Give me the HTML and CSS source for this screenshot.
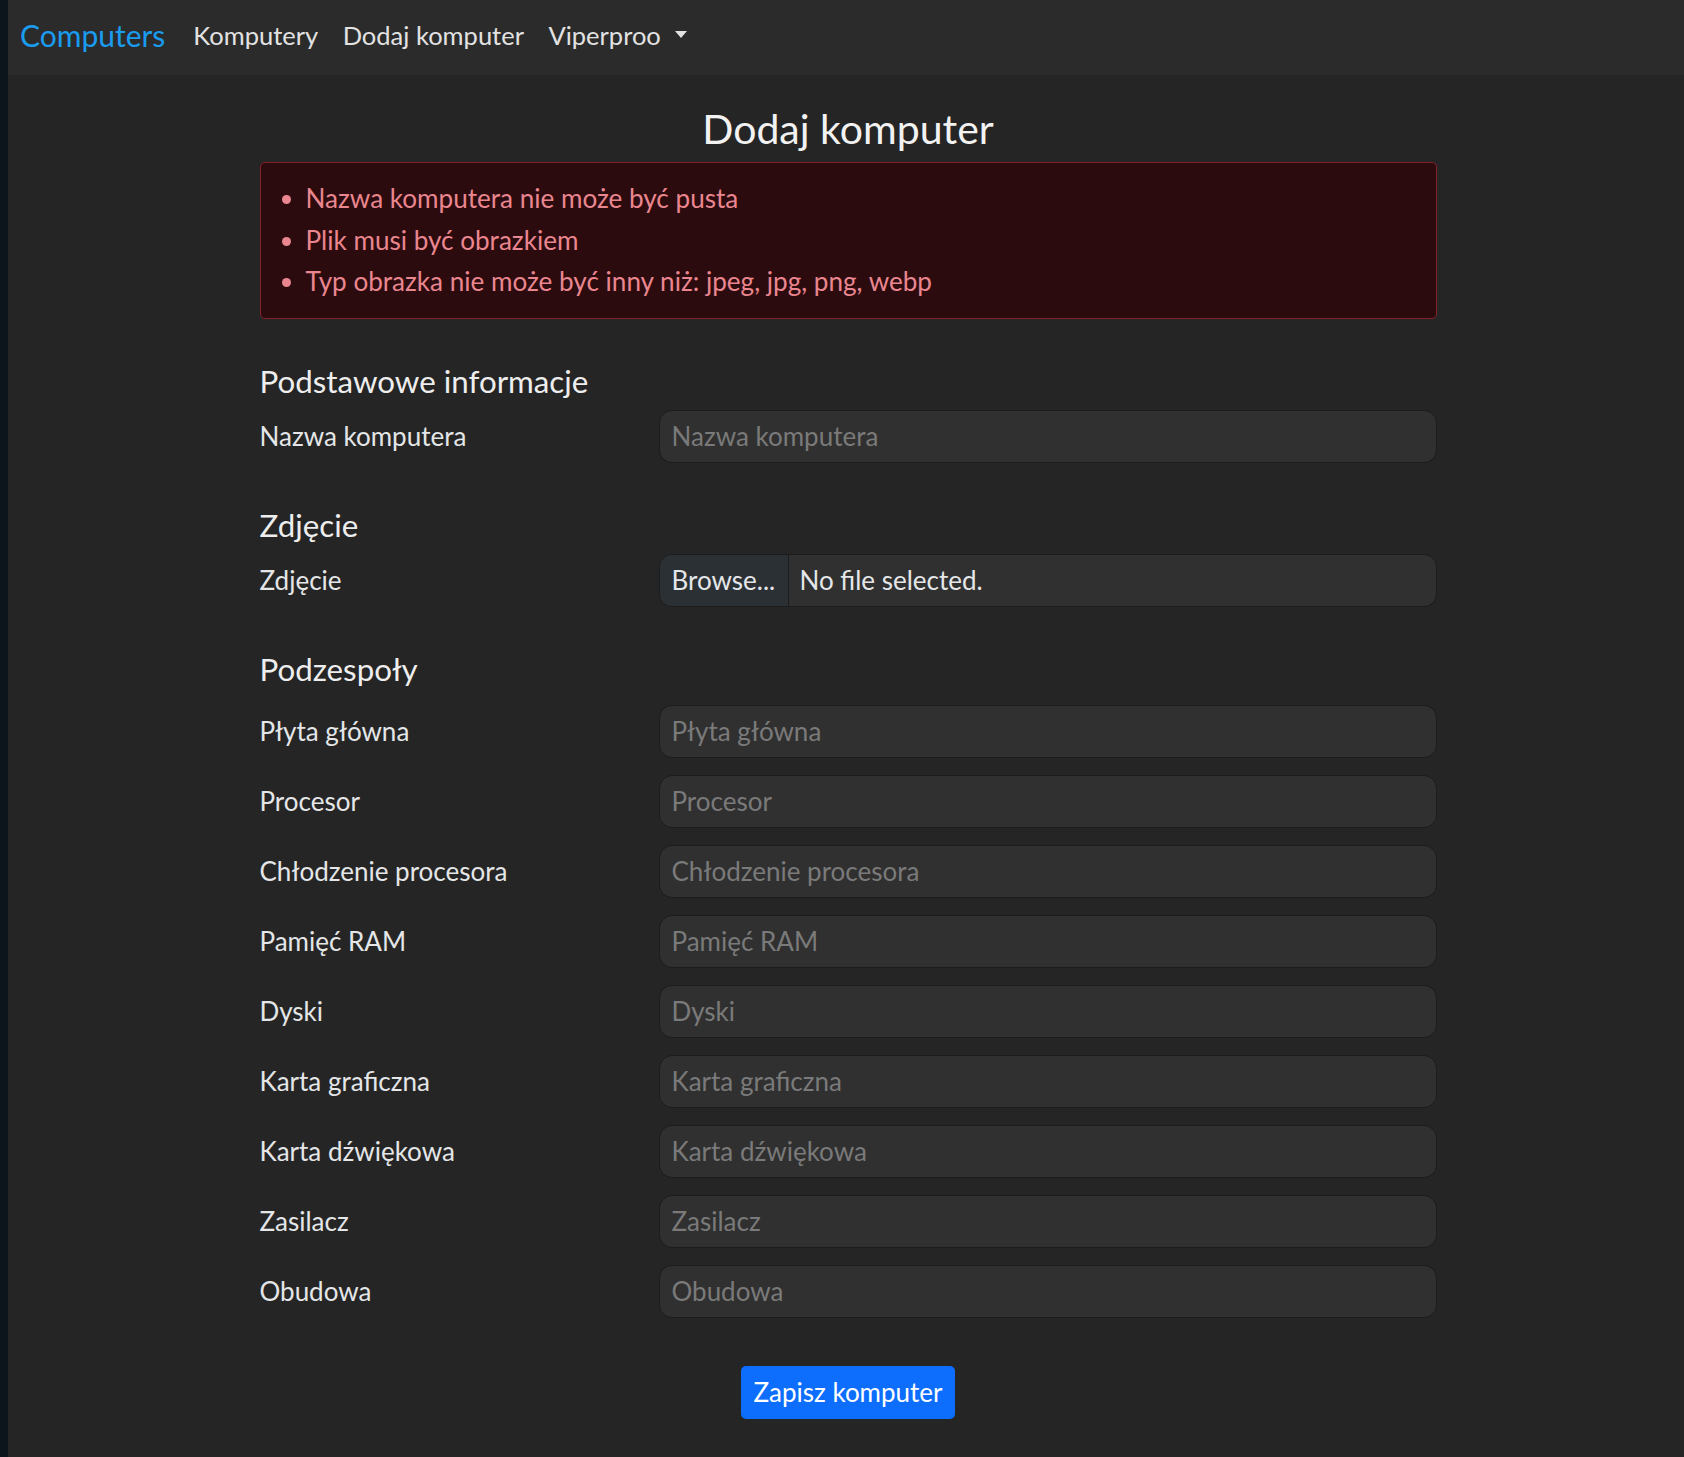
FILE: index.html
```html
<!DOCTYPE html>
<html lang="pl">
<head>
<meta charset="utf-8">
<title>Dodaj komputer</title>
<link rel="stylesheet" href="styles.css">
</head>
<body>
<div class="app">
  <div class="strip"></div>
  <div class="main">
    <nav class="navbar">
      <a class="brand" href="#">Computers</a>
      <a class="nav-link" href="#">Komputery</a>
      <a class="nav-link" href="#">Dodaj komputer</a>
      <a class="nav-link dropdown" href="#">Viperproo<span class="caret"></span></a>
    </nav>
    <div class="container">
      <h1 class="title">Dodaj komputer</h1>
      <div class="alert">
        <ul>
          <li>Nazwa komputera nie może być pusta</li>
          <li>Plik musi być obrazkiem</li>
          <li>Typ obrazka nie może być inny niż: jpeg, jpg, png, webp</li>
        </ul>
      </div>
      <form class="form">
        <h2 class="section">Podstawowe informacje</h2>
        <div class="row single"><label class="label">Nazwa komputera</label><input class="input" placeholder="Nazwa komputera"></div>

        <h2 class="section">Zdjęcie</h2>
        <div class="row single"><label class="label">Zdjęcie</label>
          <div class="file"><span class="file-btn">Browse...</span><span class="file-name">No file selected.</span></div>
        </div>

        <h2 class="section">Podzespoły</h2>
        <div class="row"><label class="label">Płyta główna</label><input class="input" placeholder="Płyta główna"></div>
        <div class="row"><label class="label">Procesor</label><input class="input" placeholder="Procesor"></div>
        <div class="row"><label class="label">Chłodzenie procesora</label><input class="input" placeholder="Chłodzenie procesora"></div>
        <div class="row"><label class="label">Pamięć RAM</label><input class="input" placeholder="Pamięć RAM"></div>
        <div class="row"><label class="label">Dyski</label><input class="input" placeholder="Dyski"></div>
        <div class="row"><label class="label">Karta graficzna</label><input class="input" placeholder="Karta graficzna"></div>
        <div class="row"><label class="label">Karta dźwiękowa</label><input class="input" placeholder="Karta dźwiękowa"></div>
        <div class="row"><label class="label">Zasilacz</label><input class="input" placeholder="Zasilacz"></div>
        <div class="row"><label class="label">Obudowa</label><input class="input" placeholder="Obudowa"></div>

        <div class="actions"><button type="button" class="btn">Zapisz komputer</button></div>
      </form>
    </div>
  </div>
</div>
</body>
</html>
```

FILE: styles.css
```css
html, body {
  margin: 0;
  padding: 0;
  background: #252525;
}
body {
  font-family: "Lato", "Noto Sans", sans-serif;
  color: #dee2e6;
}
.app {
  display: flex;
  min-height: 1457px;
}
.strip {
  width: 8px;
  flex: 0 0 8px;
  background: #0c141c;
}
.main {
  flex: 1;
  min-width: 0;
}
.navbar {
  height: 75px;
  background: #2b2b2b;
  display: flex;
  align-items: center;
  padding: 0 0 6px 12px;
  box-sizing: border-box;
}
.brand {
  color: #1a9cf0;
  font-size: 30px;
  text-decoration: none;
  margin-right: 28px;
}
.nav-link {
  color: #e2e2e2;
  font-size: 25.5px;
  text-decoration: none;
  margin-right: 24.5px;
  display: flex;
  align-items: center;
}
.caret {
  display: inline-block;
  width: 0;
  height: 0;
  margin-left: 14px;
  border-top: 7px solid #e2e2e2;
  border-left: 6.5px solid transparent;
  border-right: 6.5px solid transparent;
}
.container {
  width: 1177px;
  margin: 0 auto;
  position: relative;
  left: 2px;
}
.title {
  margin: 30px 0 9px;
  text-align: center;
  font-weight: 400;
  font-size: 41px;
  line-height: 48px;
  color: #f2f2f2;
}
.alert {
  background: #2c0b0e;
  border: 1px solid #842029;
  border-radius: 5px;
  padding: 15px 16px;
  color: #ea868f;
  font-size: 26.1px;
  line-height: 41.5px;
}
.alert ul {
  margin: 0;
  padding-left: 29px;
}
.section {
  margin: 44px 0 0;
  font-weight: 400;
  font-size: 31.3px;
  line-height: 37px;
  color: #eeeeee;
}
.row {
  display: grid;
  grid-template-columns: 399px 1fr;
  align-items: center;
  margin-top: 17px;
}
.section + .row {
  margin-top: 17px;
}
.section + .row.single {
  margin-top: 10px;
}
.label {
  font-size: 26px;
  color: #e4e6e8;
}
.input {
  height: 53px;
  box-sizing: border-box;
  border: 1px solid #1c1c1c;
  border-radius: 13px;
  background: #303030;
  padding: 0 12px;
  font-family: inherit;
  font-size: 26px;
  color: #dee2e6;
  outline: none;
  width: 100%;
}
.input::placeholder {
  color: #7a7a7a;
}
.file {
  height: 53px;
  box-sizing: border-box;
  border: 1px solid #1c1c1c;
  border-radius: 13px;
  background: #303030;
  display: flex;
  overflow: hidden;
  font-size: 26px;
}
.file-btn {
  width: 129px;
  flex: 0 0 129px;
  background: #2b3035;
  border-right: 1px solid #1c1c1c;
  display: flex;
  align-items: center;
  padding-left: 12px;
  box-sizing: border-box;
  color: #e4e6e8;
}
.file-name {
  display: flex;
  align-items: center;
  padding-left: 11px;
  color: #e4e6e8;
}
.actions {
  display: flex;
  justify-content: center;
  margin-top: 48px;
}
.btn {
  height: 53px;
  width: 214px;
  border: 0;
  border-radius: 5px;
  background: #0d6efd;
  color: #ffffff;
  font-family: inherit;
  font-size: 26px;
  padding: 0;
}
```
